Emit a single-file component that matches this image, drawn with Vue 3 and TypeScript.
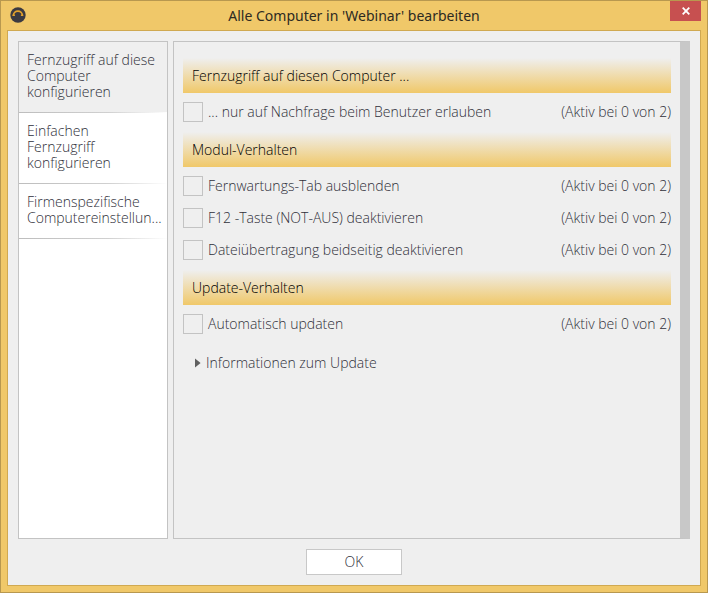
<script setup lang="ts">
import { ref } from 'vue'

interface Option {
  id: string
  label: string
  active: number
  checked: boolean
}

interface Section {
  title: string
  options: Option[]
}

const total = 2
const selected = ref(0)

const pages: string[] = [
  'Fernzugriff auf diese\nComputer\nkonfigurieren',
  'Einfachen\nFernzugriff\nkonfigurieren',
  'Firmenspezifische\nComputereinstellun...',
]

const sections = ref<Section[]>([
  {
    title: 'Fernzugriff auf diesen Computer ...',
    options: [
      { id: 'ask', label: '... nur auf Nachfrage beim Benutzer erlauben', active: 0, checked: false },
    ],
  },
  {
    title: 'Modul-Verhalten',
    options: [
      { id: 'tab', label: 'Fernwartungs-Tab ausblenden', active: 0, checked: false },
      { id: 'f12', label: 'F12 -Taste (NOT-AUS) deaktivieren', active: 0, checked: false },
      { id: 'files', label: 'Dateiübertragung beidseitig deaktivieren', active: 0, checked: false },
    ],
  },
  {
    title: 'Update-Verhalten',
    options: [{ id: 'update', label: 'Automatisch updaten', active: 0, checked: false }],
  },
])
</script>

<template>
  <div class="window">
    <header class="titlebar">
      <svg class="logo" viewBox="0 0 16 16" aria-hidden="true">
        <circle cx="8" cy="8" r="7.7" fill="#3b3a41" />
        <path d="M3.4 8.9V8.4a4.5 4.3 0 0 1 9 0v0.5" fill="none" stroke="#e3a22c" stroke-width="1.6" />
        <path d="M2.6 7.6h2.3v1.5H2.6zM10.9 7.6h2.3v1.5h-2.3z" fill="#e3a22c" />
      </svg>
      <h1 class="title">Alle Computer in 'Webinar' bearbeiten</h1>
      <button class="close" type="button" aria-label="Schließen">
        <svg viewBox="0 0 8 8" aria-hidden="true">
          <path d="M0.7 0.7L7.3 7.3M7.3 0.7L0.7 7.3" stroke="#fff" stroke-width="1.8" />
        </svg>
      </button>
    </header>

    <div class="client">
      <div class="panels">
        <nav class="sidebar">
          <button
            v-for="(page, i) in pages"
            :key="page"
            type="button"
            class="page"
            :class="{ active: i === selected }"
            @click="selected = i"
          >{{ page }}</button>
        </nav>

        <main class="content">
          <section v-for="section in sections" :key="section.title">
            <h2 class="heading">{{ section.title }}</h2>
            <div class="options">
              <div v-for="option in section.options" :key="option.id" class="option">
                <input :id="option.id" v-model="option.checked" class="box" type="checkbox" />
                <label class="label" :for="option.id">{{ option.label }}</label>
                <span>(Aktiv bei {{ option.active }} von {{ total }})</span>
              </div>
            </div>
          </section>
          <button class="more" type="button">
            <svg class="arrow" viewBox="0 0 6 10" aria-hidden="true">
              <path d="M0 0.5L5.6 5L0 9.5z" fill="#606060" />
            </svg>
            Informationen zum Update
          </button>
        </main>
      </div>

      <footer class="footer">
        <button class="ok" type="button">OK</button>
      </footer>
    </div>
  </div>
</template>

<style>
body {
  margin: 0;
}
</style>

<style scoped>
.window {
  box-sizing: border-box;
  min-height: 100vh;
  display: flex;
  flex-direction: column;
  padding: 0 6px 6px;
  border: 1px solid #b8984f;
  background: #f0c869;
  color: #30303a;
  font: 350 14px/16px 'Open Sans', 'Noto Sans', sans-serif;
}

button {
  font: inherit;
  color: inherit;
  border: 0;
  padding: 0;
  background: none;
  cursor: pointer;
}

.titlebar {
  display: grid;
  grid-template-columns: 31px 1fr 31px;
  height: 29px;
}

.logo {
  width: 16px;
  height: 16px;
  margin: 6px 0 0 3px;
}

.title {
  margin: 0;
  text-align: center;
  font: 400 14px/29px 'Noto Sans', 'Open Sans', sans-serif;
  color: #2d2a22;
}

.close {
  display: flex;
  align-items: center;
  justify-content: center;
  height: 20px;
  background: #c75050;
}

.close svg {
  width: 8px;
  height: 8px;
}

.client {
  flex: 1;
  display: flex;
  flex-direction: column;
  padding: 10px;
  border: 1px solid #d0a951;
  background: #efefef;
}

.panels {
  flex: 1;
  display: flex;
  gap: 5px;
}

.sidebar {
  box-sizing: border-box;
  flex: 0 0 150px;
  min-width: 0;
  border: 1px solid #c3c3c3;
  background: #fff;
}

.page {
  display: block;
  width: 100%;
  padding: 10px 4px 12px 8px;
  border-bottom: 1px solid;
  border-image: linear-gradient(to right, #bdbdbd, #d0d0d0 60%, #fff) 1;
  text-align: left;
  white-space: pre;
}

.page.active {
  background: #efefef;
}

.content {
  flex: 1;
  min-width: 0;
  padding: 16px 9px;
  border: 1px solid #c3c3c3;
  border-right: 10px solid #c8c8c8;
}

.heading {
  margin: 0;
  padding: 0 9px;
  font: inherit;
  line-height: 35px;
  color: #000;
  background: linear-gradient(#efefef, #f0c869);
}

.options {
  padding: 3px 0 4px;
}

.option {
  display: flex;
  align-items: center;
  height: 32px;
}

.box {
  appearance: none;
  box-sizing: border-box;
  width: 20px;
  height: 20px;
  margin: 0 5px 0 0;
  border: 1px solid #c3c3c3;
  background: #efefef;
}

.box:checked {
  background: #f0c869;
}

.label {
  flex: 1;
}

.more {
  display: flex;
  align-items: center;
  gap: 5px;
  margin-top: 11px;
  padding-left: 12px;
}

.arrow {
  width: 6px;
  height: 10px;
}

.footer {
  display: flex;
  justify-content: center;
  padding-top: 10px;
}

.ok {
  width: 96px;
  height: 26px;
  border: 1px solid #c8c8c8;
  background: #fff;
}
</style>
